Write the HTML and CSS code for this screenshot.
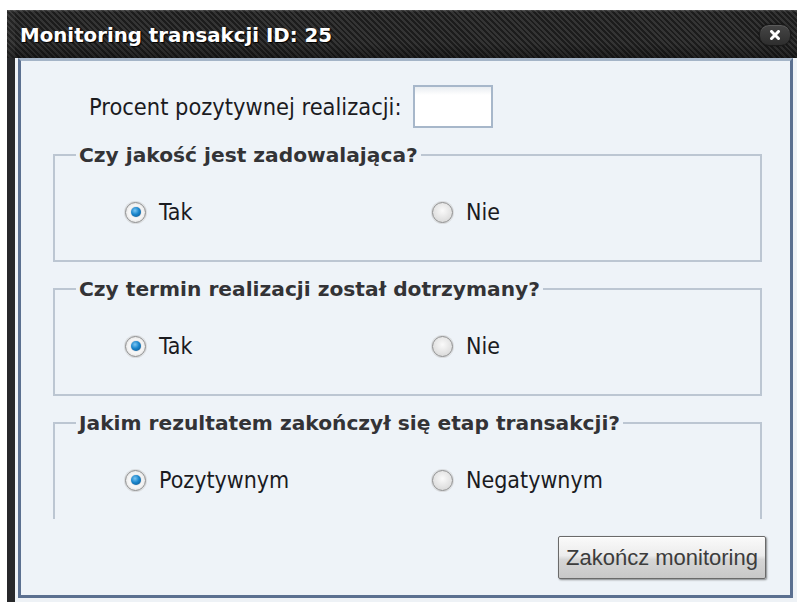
FILE: index.html
```html
<!DOCTYPE html>
<html lang="pl">
<head>
<meta charset="utf-8">
<title>Monitoring transakcji</title>
<link rel="stylesheet" href="styles.css">
</head>
<body>
<div class="window">
  <div class="titlebar">
    <span class="title">Monitoring transakcji ID: 25</span>
    <button class="close" type="button" aria-label="Zamknij">
      <svg width="10" height="10" viewBox="0 0 10 10"><path d="M1.5 1.5 L8.5 8.5 M8.5 1.5 L1.5 8.5" stroke="#fff" stroke-width="3" stroke-linecap="square"/></svg>
    </button>
  </div>
  <div class="window-body">
    <div class="panel">
      <div class="scroll">
        <div class="percent-row">
          <label class="percent-label" for="pct">Procent pozytywnej realizacji:</label>
          <input id="pct" class="pct-input" type="text">
        </div>

        <fieldset class="group">
          <legend>Czy jakość jest zadowalająca?</legend>
          <div class="options">
            <label class="opt"><span class="radio checked"></span>Tak</label>
            <label class="opt"><span class="radio"></span>Nie</label>
          </div>
        </fieldset>

        <fieldset class="group">
          <legend>Czy termin realizacji został dotrzymany?</legend>
          <div class="options">
            <label class="opt"><span class="radio checked"></span>Tak</label>
            <label class="opt"><span class="radio"></span>Nie</label>
          </div>
        </fieldset>

        <fieldset class="group">
          <legend>Jakim rezultatem zakończył się etap transakcji?</legend>
          <div class="options">
            <label class="opt"><span class="radio checked"></span>Pozytywnym</label>
            <label class="opt"><span class="radio"></span>Negatywnym</label>
          </div>
        </fieldset>
      </div>
      <div class="footer">
        <button class="finish" type="button">Zakończ monitoring</button>
      </div>
    </div>
  </div>
</div>
</body>
</html>
```

FILE: styles.css
```css
html, body {
  margin: 0;
  padding: 0;
  background: #ffffff;
  overflow: hidden;
}

body {
  font-family: "DejaVu Sans Condensed", "DejaVu Sans", sans-serif;
  font-stretch: condensed;
  color: #1b1b1f;
}

.window {
  margin: 10px 0 0 7px;
  width: 790px;
}

/* dark carbon title bar */
.titlebar {
  height: 48px;
  box-sizing: border-box;
  display: flex;
  align-items: center;
  justify-content: space-between;
  padding: 2px 6px 0 13px;
  background:
    linear-gradient(to bottom, rgba(255,255,255,0.18) 0, rgba(255,255,255,0) 2px, rgba(0,0,0,0) 70%, rgba(0,0,0,0.35) 100%),
    repeating-linear-gradient(45deg, #1c1c1c 0 2px, #343434 2px 4px);
  box-shadow: inset 8px 0 0 rgba(255,255,255,0.04);
}

.title {
  font-family: "DejaVu Sans", sans-serif;
  font-stretch: normal;
  font-weight: bold;
  font-size: 19.8px;
  color: #ffffff;
  text-shadow: 1px 1px 1px #000;
}

.close {
  width: 32px;
  height: 22px;
  border: 1px solid #1a1a1a;
  border-radius: 10px;
  background: linear-gradient(#464646, #2e2e2e);
  box-shadow: inset 0 1px 0 rgba(255,255,255,0.12), 0 0 2px rgba(0,0,0,0.6);
  display: flex;
  align-items: center;
  justify-content: center;
  padding: 0;
  margin-top: -1px;
}

.close svg {
  display: block;
}

.window-body {
  border-left: 8px solid #27282a;
  background: #eef2f6;
  padding: 0 4px 4px 3px;
}

.panel {
  height: 540px;
  box-sizing: border-box;
  border: 3px solid #5b7090;
  border-top-color: #a4b4c7;
  background: #eef3f8;
  display: flex;
  flex-direction: column;
}

.scroll {
  height: 458px;
  overflow: hidden;
  flex: none;
}

.percent-row {
  display: flex;
  align-items: center;
  gap: 11px;
  height: 43px;
  margin: 24px 0 0 68px;
}

.percent-label {
  font-size: 23.4px;
}

.pct-input {
  width: 80px;
  height: 43px;
  box-sizing: border-box;
  border: 2px solid #a7b7ca;
  background: linear-gradient(#e9edf1 0, #ffffff 8px);
  margin: 0;
  padding: 0;
}

.group {
  margin: 16px 28px 0 32px;
  padding: 34px 21px 36px;
  border: 2px solid #bcc6d2;
  min-width: 0;
}

.group legend {
  font-family: "DejaVu Sans", sans-serif;
  font-stretch: normal;
  font-weight: bold;
  font-size: 20.2px;
  color: #333336;
  padding: 0 3px;
  line-height: 22px;
}

.options {
  display: grid;
  grid-template-columns: 307px auto;
  padding-left: 49px;
}

.opt {
  display: flex;
  align-items: center;
  font-size: 23px;
  line-height: 24px;
}

.radio {
  width: 21px;
  height: 21px;
  border-radius: 50%;
  box-sizing: border-box;
  border: 1px solid #8e8e8e;
  background: radial-gradient(circle at 50% 40%, #fafafa 0, #e2e2e2 60%, #cfcfcf 100%);
  box-shadow: 0 0 0 1px rgba(200,200,200,0.5);
  margin-right: 13px;
  flex: none;
  display: flex;
  align-items: center;
  justify-content: center;
}

.radio.checked {
  background: radial-gradient(circle, #ffffff 0, #f4f4f4 55%, #cfcfcf 100%);
}

.radio.checked::after {
  content: "";
  width: 10px;
  height: 10px;
  border-radius: 50%;
  background: radial-gradient(circle at 40% 35%, #7cc6f3 0, #1a86cc 45%, #0d4f86 100%);
  box-shadow: 0 0 1px rgba(0,40,80,0.6);
}

.footer {
  display: flex;
  justify-content: flex-end;
  padding: 17px 24px 0 0;
}

.finish {
  width: 208px;
  height: 43px;
  box-sizing: border-box;
  border: 1px solid #6a6a6a;
  border-radius: 2px;
  background: linear-gradient(#fafafa 0, #ececec 45%, #d6d6d6 55%, #c8c8c8 100%);
  box-shadow: 1px 1px 2px rgba(0,0,0,0.45), inset 0 1px 0 #ffffff;
  font-family: "Liberation Sans", Arial, sans-serif;
  font-size: 22px;
  color: #3c3c3c;
  padding: 0;
}
```
